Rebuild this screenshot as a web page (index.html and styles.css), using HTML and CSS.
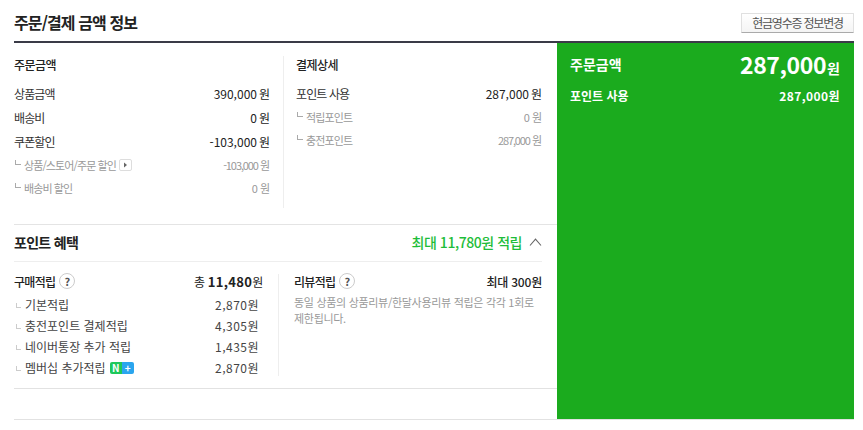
FILE: index.html
```html
<!DOCTYPE html>
<html lang="ko">
<head>
<meta charset="utf-8">
<title>주문/결제 금액 정보</title>
<link rel="stylesheet" href="styles.css">
</head>
<body>
<div class="page">
  <header class="head">
    <h2 class="title">주문/결제 금액 정보</h2>
    <button class="receipt">현금영수증 정보변경</button>
  </header>
  <div class="main">
    <div class="left">
      <section class="amounts">
        <div class="col col-a">
          <h3 class="sub">주문금액</h3>
          <div class="row"><span>상품금액</span><span class="val">390,000<i>원</i></span></div>
          <div class="row"><span>배송비</span><span class="val">0<i>원</i></span></div>
          <div class="row"><span>쿠폰할인</span><span class="val">-103,000<i>원</i></span></div>
          <div class="row minor"><span class="inline"><b class="tick"></b>상품/스토어/주문 할인<em class="more"><svg width="5" height="6" viewBox="0 0 5 6"><path d="M1 0.5 L4 3 L1 5.5Z" fill="#666"/></svg></em></span><span class="val narrow">-103,000<i>원</i></span></div>
          <div class="row minor"><span class="inline"><b class="tick"></b>배송비 할인</span><span class="val">0<i>원</i></span></div>
        </div>
        <div class="col col-b">
          <h3 class="sub">결제상세</h3>
          <div class="row"><span>포인트 사용</span><span class="val">287,000<i>원</i></span></div>
          <div class="row minor"><span class="inline"><b class="tick"></b>적립포인트</span><span class="val">0<i>원</i></span></div>
          <div class="row minor"><span class="inline"><b class="tick"></b>충전포인트</span><span class="val narrow">287,000<i>원</i></span></div>
        </div>
      </section>
      <section class="benefit">
        <div class="benefit-head">
          <h3 class="benefit-title">포인트 혜택</h3>
          <div class="benefit-max">최대 11,780원 적립<svg class="chev" width="13" height="8" viewBox="0 0 13 8"><path d="M1 7.5 L6.5 1.2 L12 7.5" fill="none" stroke="#666" stroke-width="1.1"/></svg></div>
        </div>
        <div class="benefit-body">
          <div class="earn">
            <div class="earn-top"><span class="label">구매적립<em class="q">?</em></span><span class="total">총 <strong>11,480</strong>원</span></div>
            <div class="earn-row"><span class="inline"><b class="tick pale"></b>기본적립</span><span class="amt">2,870원</span></div>
            <div class="earn-row"><span class="inline"><b class="tick pale"></b>충전포인트 결제적립</span><span class="amt">4,305원</span></div>
            <div class="earn-row"><span class="inline"><b class="tick pale"></b>네이버통장 추가 적립</span><span class="amt">1,435원</span></div>
            <div class="earn-row"><span class="inline"><b class="tick pale"></b>멤버십 추가적립<span class="badge"><span class="badge-n">N</span><span class="badge-p">+</span></span></span><span class="amt">2,870원</span></div>
          </div>
          <div class="review">
            <div class="earn-top"><span class="label">리뷰적립<em class="q">?</em></span><span class="total semi">최대 300원</span></div>
            <p class="note">동일 상품의 상품리뷰/한달사용리뷰 적립은 각각 1회로 제한됩니다.</p>
          </div>
        </div>
      </section>
    </div>
    <aside class="summary">
      <div class="sum-top"><span>주문금액</span><span class="sum-big">287,000<i>원</i></span></div>
      <div class="sum-row"><span>포인트 사용</span><span class="sum-val">287,000원</span></div>
    </aside>
  </div>
</div>
</body>
</html>
```
FILE: styles.css
```css
* { box-sizing: border-box; }
html, body { margin: 0; background: #fff; }
body { font-family: "Noto Sans CJK KR", "Noto Sans", sans-serif; color: #222; font-size: 12px; }
h2, h3, p { margin: 0; }
i, em { font-style: normal; }
.page { width: 840px; margin-left: 14px; height: 420px; border-bottom: 1px solid #e2e2e2; overflow: hidden; }
.head { height: 43px; border-bottom: 2px solid #3a3b47; display: flex; justify-content: space-between; align-items: flex-start; }
.title { font-size: 16px; font-weight: 700; line-height: 20px; margin-top: 12px; letter-spacing: -0.9px; color: #222; }
.receipt { width: 113px; height: 20px; margin-top: 13px; padding: 0; background: linear-gradient(#fff, #f4f4f4); border: 1px solid #e0e0e0; border-bottom-color: #aaa; border-radius: 1px; font: 12px/16px "Noto Sans CJK KR", sans-serif; letter-spacing: -1.2px; color: #555; }
.main { display: flex; height: 376px; }
.left { width: 543px; flex: none; }
.amounts { display: flex; height: 182px; border-bottom: 1px solid #e4e4e4; }
.col { margin-top: 13px; height: 152px; }
.col-a { width: 270px; padding-right: 13px; border-right: 1px solid #eee; }
.col-b { width: 273px; padding-left: 12px; padding-right: 15px; }
.sub { font-size: 12px; font-weight: 500; line-height: 18px; letter-spacing: -0.5px; margin-bottom: 7px; color: #222; }
.row { display: flex; justify-content: space-between; align-items: center; height: 24px; font-size: 12px; letter-spacing: -0.9px; color: #333; }
.val { padding-top: 1px; font-size: 12px; letter-spacing: 0; color: #222; }
.val i { margin-left: 2px; letter-spacing: 0; }
.row.minor { height: 23px; color: #999; font-size: 11px; }
.minor .val { color: #999; font-size: 11px; }
.val.narrow { letter-spacing: -1.1px; }
.val.narrow i { letter-spacing: 0; }
.inline { display: inline-flex; align-items: center; }
.tick { flex: none; display: block; width: 6px; height: 5px; margin: 0 3px 5px 1px; border-left: 1px solid #aaa; border-bottom: 1px solid #aaa; }
.tick.pale { width: 5px; height: 5px; border-color: #ccc; margin: 2px 4px 0 2px; }
.more { display: inline-flex; align-items: center; justify-content: center; width: 13px; height: 12px; margin-left: 3px; border: 1px solid #ddd; border-radius: 2px; }
.benefit-head { display: flex; justify-content: space-between; align-items: center; height: 37px; padding-bottom: 2px; margin-right: 15px; border-bottom: 1px solid #eee; }
.benefit-title { font-size: 14px; font-weight: 700; letter-spacing: -0.7px; color: #222; }
.benefit-max { display: flex; align-items: center; font-size: 14px; font-weight: 500; color: #1ebd3a; letter-spacing: -0.45px; }
.chev { margin-left: 7px; }
.benefit-body { display: flex; padding-top: 12px; height: 127px; border-bottom: 1px solid #e2e2e2; }
.earn { width: 265px; height: 102px; padding-right: 15px; border-right: 1px solid #eee; }
.review { width: 263px; flex: none; padding-left: 15px; }
.earn-top { display: flex; justify-content: space-between; align-items: center; height: 14px; margin-bottom: 6px; }
.label { font-size: 12px; font-weight: 500; letter-spacing: -0.7px; color: #222; display: inline-flex; align-items: center; }
.q { display: inline-block; width: 16px; height: 16px; margin-left: 4px; border: 1px solid #ccc; border-radius: 50%; font-size: 11px; line-height: 14px; text-align: center; font-weight: 700; color: #555; letter-spacing: 0; }
.total { font-size: 12px; color: #222; letter-spacing: -0.3px; }
.total strong { font-size: 13px; font-weight: 700; letter-spacing: 0.3px; }
.total.semi { font-weight: 500; letter-spacing: -0.2px; }
.earn-row { display: flex; justify-content: space-between; align-items: center; height: 21px; padding-right: 4px; font-size: 12px; color: #444; letter-spacing: 0; }
.amt { letter-spacing: 0.5px; }
.badge { display: inline-flex; height: 12px; width: 24px; margin-left: 4px; color: #fff; font-size: 10px; line-height: 12px; font-weight: 700; text-align: center; }
.badge-n { width: 12px; background: #1ec85a; border-radius: 2px 0 0 2px; }
.badge-p { width: 12px; background: #2aa5ee; border-radius: 0 2px 2px 0; }
.note { margin-top: 3px; font-size: 11px; line-height: 16px; color: #999; letter-spacing: -0.3px; }
.summary { width: 297px; background: #1bab1e; color: #fff; padding: 0 14px 0 13px; }
.sum-top { display: flex; justify-content: space-between; align-items: center; height: 42px; font-size: 14px; font-weight: 700; letter-spacing: 0; }
.sum-big { font-size: 23px; font-weight: 700; letter-spacing: -0.4px; }
.sum-big i { font-size: 14px; margin-left: 1px; letter-spacing: 0; }
.sum-row { display: flex; justify-content: space-between; align-items: center; height: 20px; font-size: 12px; font-weight: 700; letter-spacing: 0; }
.sum-val { letter-spacing: 0.4px; }
```
